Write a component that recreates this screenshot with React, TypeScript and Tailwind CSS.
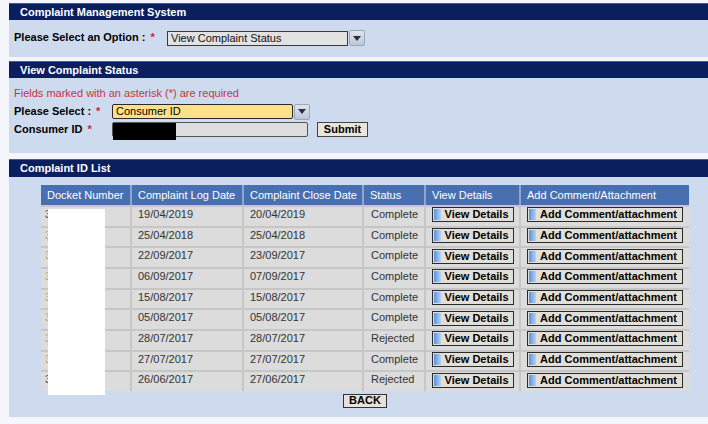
import React from "react";

const rows: [string, string, string][] = [
  ["19/04/2019", "20/04/2019", "Complete"],
  ["25/04/2018", "25/04/2018", "Complete"],
  ["22/09/2017", "23/09/2017", "Complete"],
  ["06/09/2017", "07/09/2017", "Complete"],
  ["15/08/2017", "15/08/2017", "Complete"],
  ["05/08/2017", "05/08/2017", "Complete"],
  ["28/07/2017", "28/07/2017", "Rejected"],
  ["27/07/2017", "27/07/2017", "Complete"],
  ["26/06/2017", "27/06/2017", "Rejected"],
];

function Header({ title, h }: { title: string; h: string }) {
  return (
    <div
      className={`${h} bg-[#0b1f5e] border-t border-[#4a5c92] pl-[11px] flex items-center text-white font-bold text-[11px]`}
    >
      {title}
    </div>
  );
}

function Arrow() {
  return (
    <div className="w-[16px] h-[16px] ml-[1px] border border-[#9ba7bb] rounded-[2px] bg-gradient-to-b from-[#dfe5ee] to-[#bcc7d8] flex items-center justify-center">
      <svg width="8" height="5" viewBox="0 0 8 5">
        <path d="M0 0 L8 0 L4 5 Z" fill="#2a2f3a" />
      </svg>
    </div>
  );
}

function Star() {
  return <span className="text-[#d0223a] font-bold">*</span>;
}

function TblButton({ label, w }: { label: string; w: string }) {
  return (
    <div className={`${w} ml-[6px] h-[15px] border border-[#2a2a2a] bg-[#e2dfd8] flex items-stretch p-[1px]`}>
      <div className="w-[7px] bg-gradient-to-r from-[#5b92de] to-[#b6d2f3]" />
      <div className="flex-1 flex items-center justify-center font-bold text-[11px] text-black leading-none">
        {label}
      </div>
    </div>
  );
}

export default function App() {
  return (
    <div className="min-h-[424px] w-[708px] bg-[#f4f6fc] pt-[3px] font-['Liberation_Sans',Arial,sans-serif] text-[11px] text-black overflow-hidden">
      {/* Section 1 */}
      <div className="ml-[9px]">
        <Header title="Complaint Management System" h="h-[17px]" />
        <div className="h-[37px] bg-[#cedbee] pt-[10px] pl-[5px] flex items-start">
          <div className="w-[153px] h-[15px] flex items-center font-bold">
            <span>Please Select an Option :</span>
            <span className="ml-[5px]">
              <Star />
            </span>
          </div>
          <div className="flex items-center">
            <div className="w-[181px] h-[15px] border border-[#3a3a3a] bg-[#e2e2e2] pl-[3px] flex items-center leading-none text-[#111]">
              View Complaint Status
            </div>
            <Arrow />
          </div>
        </div>
      </div>

      {/* Section 2 */}
      <div className="ml-[9px] mt-[4px]">
        <Header title="View Complaint Status" h="h-[17px]" />
        <div className="h-[75px] bg-[#cedbee] pt-[8px] pl-[5px]">
          <div className="h-[14px] flex items-center text-[#c8343c]">
            Fields marked with an asterisk (*) are required
          </div>
          <div className="mt-[4px] h-[15px] flex items-center">
            <div className="w-[98px] flex items-center font-bold">
              <span>Please Select :</span>
              <span className="ml-[5px]">
                <Star />
              </span>
            </div>
            <div className="w-[181px] h-[15px] border border-[#2a2a2a] rounded-[2px] bg-[#ffe08a] pl-[3px] flex items-center leading-none">
              Consumer ID
            </div>
            <Arrow />
          </div>
          <div className="mt-[3px] h-[15px] flex items-center">
            <div className="w-[98px] flex items-center font-bold">
              <span>Consumer ID</span>
              <span className="ml-[5px]">
                <Star />
              </span>
            </div>
            <div className="relative w-[196px] h-[15px] border border-[#555] rounded-[2px] bg-[#dddddd]">
              <div className="absolute left-0 top-0 w-[63px] h-[17px] bg-black" />
            </div>
            <div className="ml-[9px] w-[51px] h-[15px] border border-[#444] bg-[#e9e5dd] flex items-center justify-center font-bold leading-none">
              Submit
            </div>
          </div>
        </div>
      </div>

      {/* Section 3 */}
      <div className="ml-[9px] mt-[6px]">
        <Header title="Complaint ID List" h="h-[18px]" />
        <div className="relative h-[240px] bg-[#cedbee] pt-[8px] pl-[32px]">
          <div className="w-[648px]">
            <div className="grid grid-cols-[89px_110px_118px_60px_93px_168px] gap-x-[2px] bg-[#8ea6cc] h-[20px]">
              {[
                "Docket Number",
                "Complaint Log Date",
                "Complaint Close Date",
                "Status",
                "View Details",
                "Add Comment/Attachment",
              ].map((t) => (
                <div key={t} className="bg-[#4870b0] text-white pl-[6px] flex items-center whitespace-nowrap">
                  {t}
                </div>
              ))}
            </div>
            <div className="grid grid-cols-[89px_110px_118px_60px_93px_168px] auto-rows-[18.67px] gap-[2px] pt-[2px] bg-[#c6c6c6]">
              {rows.map((r, i) => (
                <React.Fragment key={i}>
                  <div className={`bg-[#dcdcdc] pl-[4px] pb-[4px] flex items-center ${i === 0 || i === 8 ? "text-[#6a4a20]" : "text-[#d4a040]"}`}>
                    3000000
                  </div>
                  <div className="bg-[#dcdcdc] pl-[6px] pb-[4px] flex items-center text-[#333]">{r[0]}</div>
                  <div className="bg-[#dcdcdc] pl-[6px] pb-[4px] flex items-center text-[#333]">{r[1]}</div>
                  <div className="bg-[#dcdcdc] pl-[7px] pb-[4px] flex items-center text-[#333]">{r[2]}</div>
                  <div className="bg-[#dcdcdc] pb-[3px] flex items-center">
                    <TblButton label="View Details" w="w-[82px]" />
                  </div>
                  <div className="bg-[#dcdcdc] pb-[3px] flex items-center">
                    <TblButton label="Add Comment/attachment" w="w-[156px]" />
                  </div>
                </React.Fragment>
              ))}
            </div>
            <div className="mt-[3px] flex justify-center">
              <div className="w-[44px] h-[14px] border border-[#333] bg-[#e6e2da] flex items-center justify-center font-bold leading-none">
                BACK
              </div>
            </div>
          </div>
          <div className="absolute left-[39px] top-[32px] w-[57px] h-[186px] bg-white" />
        </div>
      </div>
    </div>
  );
}
